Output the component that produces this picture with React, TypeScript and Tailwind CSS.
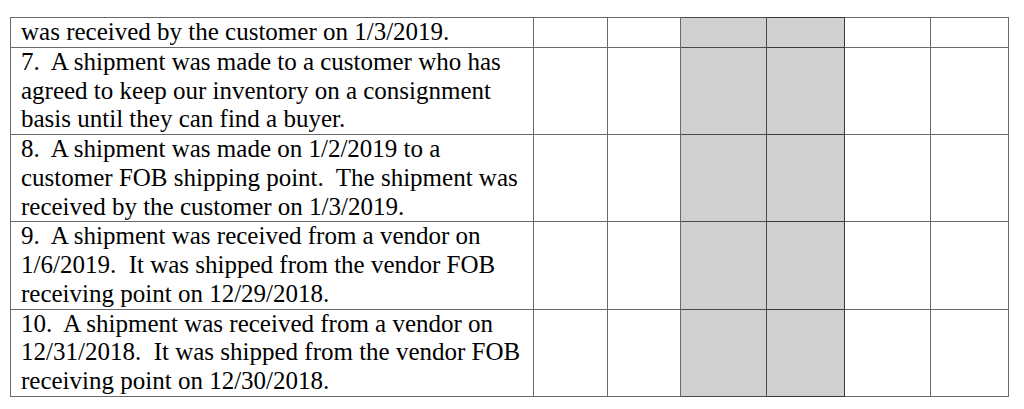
import React from "react";

const rows: string[][] = [
  ["was received by the customer on 1/3/2019."],
  [
    "7.  A shipment was made to a customer who has",
    "agreed to keep our inventory on a consignment",
    "basis until they can find a buyer.",
  ],
  [
    "8.  A shipment was made on 1/2/2019 to a",
    "customer FOB shipping point.  The shipment was",
    "received by the customer on 1/3/2019.",
  ],
  [
    "9.  A shipment was received from a vendor on",
    "1/6/2019.  It was shipped from the vendor FOB",
    "receiving point on 12/29/2018.",
  ],
  [
    "10.  A shipment was received from a vendor on",
    "12/31/2018.  It was shipped from the vendor FOB",
    "receiving point on 12/30/2018.",
  ],
];

export default function App() {
  return (
    <div className="w-[1024px] h-[409px] bg-white pt-[17px] pl-[10px] overflow-hidden">
      <table
        className="table-fixed border-collapse w-[999px] text-black text-[25px] leading-[28.75px]"
        style={{ fontFamily: '"Liberation Serif", "Times New Roman", serif' }}
      >
        <colgroup>
          <col className="w-[523px]" />
          <col className="w-[74px]" />
          <col className="w-[73px]" />
          <col className="w-[86px]" />
          <col className="w-[78px]" />
          <col className="w-[86px]" />
          <col className="w-[78px]" />
        </colgroup>
        <tbody>
          {rows.map((lines, i) => (
            <tr key={i}>
              <td className="border border-[#6a6a6a] align-top pl-[10px] pr-0 py-0 whitespace-pre">
                {lines.map((l, j) => (
                  <div key={j}>{l}</div>
                ))}
              </td>
              <td className="border border-[#6a6a6a]" />
              <td className="border border-[#6a6a6a]" />
              <td className="border border-[#4a4a4a] bg-[#d0d0d0]" />
              <td className="border border-[#3a3a3a] bg-[#d0d0d0]" />
              <td className="border border-[#6a6a6a]" />
              <td className="border border-[#6a6a6a]" />
            </tr>
          ))}
        </tbody>
      </table>
    </div>
  );
}
